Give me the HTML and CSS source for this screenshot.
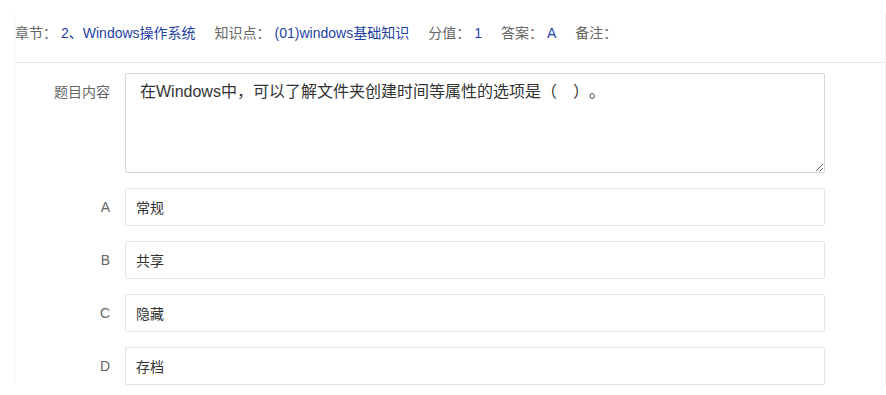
FILE: index.html
```html
<!DOCTYPE html>
<html lang="zh-CN">
<head>
    <meta charset="UTF-8">
    <meta name="viewport" content="width=device-width, initial-scale=1.0">
    <title>题目详情</title>
    <link rel="stylesheet" href="styles.css">
</head>
<body>

    <div class="panel">
        <div class="info-bar">
            <span class="info-item"><span class="info-label">章节：</span><span class="info-value">2、Windows操作系统</span></span>
            <span class="info-item"><span class="info-label">知识点：</span><span class="info-value">(01)windows基础知识</span></span>
            <span class="info-item"><span class="info-label">分值：</span><span class="info-value">1</span></span>
            <span class="info-item"><span class="info-label">答案：</span><span class="info-value">A</span></span>
            <span class="info-item"><span class="info-label">备注：</span><span class="info-value"></span></span>
        </div>

        <div class="form">
            <div class="form-row">
                <label class="form-label top">题目内容</label>
                <textarea class="content-box">在Windows中，可以了解文件夹创建时间等属性的选项是（　）。</textarea>
            </div>
            <div class="form-row">
                <label class="form-label">A</label>
                <input type="text" class="option-input" value="常规">
            </div>
            <div class="form-row">
                <label class="form-label">B</label>
                <input type="text" class="option-input" value="共享">
            </div>
            <div class="form-row">
                <label class="form-label">C</label>
                <input type="text" class="option-input" value="隐藏">
            </div>
            <div class="form-row">
                <label class="form-label">D</label>
                <input type="text" class="option-input" value="存档">
            </div>
        </div>
    </div>

</body>
</html>
```

FILE: styles.css
```css
body {
    font-family: "Liberation Sans", "Noto Sans CJK SC", sans-serif;
    margin: 0;
    padding: 0;
    background: #fff;
    color: #333;
    text-spacing-trim: space-all;
}
.panel {
    box-sizing: border-box;
    width: 872px;
    margin: 13px 0 0 14px;
    border-left: 1px solid #f3f3f3;
    border-right: 1px solid #f0f0f0;
}
.info-bar {
    display: flex;
    align-items: center;
    padding: 10px 0 19px 0;
    line-height: 20px;
    font-size: 14px;
    border-bottom: 1px solid #e8e8e8;
}
.info-item {
    margin-right: 19px;
}
.info-label {
    color: #666;
    margin-right: 4px;
}
.info-value {
    color: #1f3fa5;
}
.form {
    padding-top: 10px;
}
.form-row {
    display: flex;
    align-items: center;
    margin-bottom: 15px;
}
.form-label {
    width: 95px;
    padding-right: 15px;
    text-align: right;
    font-size: 14px;
    line-height: 20px;
    color: #666;
}
.form-label.top {
    align-self: flex-start;
    padding-top: 9px;
}
.content-box {
    box-sizing: border-box;
    width: 700px;
    height: 100px;
    padding: 7px 14px;
    border: 1px solid #d6d6d6;
    border-radius: 2px;
    font-family: "Liberation Sans", "Noto Sans CJK SC", sans-serif;
    font-size: 16px;
    line-height: 22px;
    color: #333;
    outline: none;
    text-spacing-trim: space-all;
}
.option-input {
    box-sizing: border-box;
    width: 700px;
    height: 38px;
    padding: 0 10px;
    border: 1px solid #e3e3e3;
    border-radius: 2px;
    font-family: "Liberation Sans", "Noto Sans CJK SC", sans-serif;
    font-size: 14px;
    color: #333;
    outline: none;
}
```
